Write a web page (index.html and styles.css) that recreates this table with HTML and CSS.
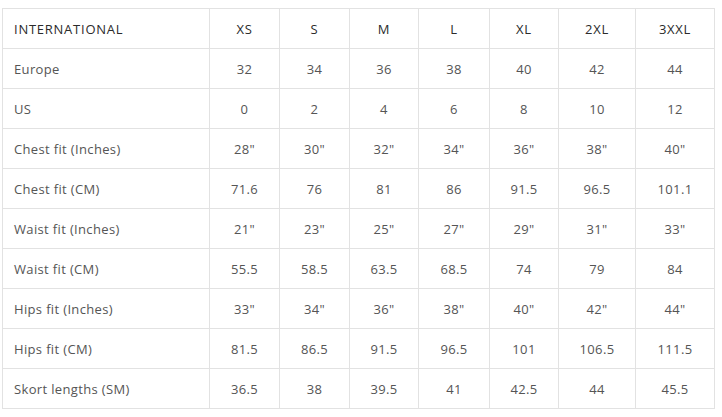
FILE: index.html
```html
<!DOCTYPE html>
<html>
<head>
<meta charset="utf-8">
<link rel="stylesheet" href="styles.css">
</head>
<body>
<table class="size-table">
  <colgroup>
    <col class="c-label"><col class="c70"><col class="c70"><col class="c69"><col class="c71"><col class="c69"><col class="c77"><col class="c79">
  </colgroup>
  <thead>
    <tr><th>INTERNATIONAL</th><th>XS</th><th>S</th><th>M</th><th>L</th><th>XL</th><th>2XL</th><th>3XXL</th></tr>
  </thead>
  <tbody>
    <tr><td>Europe</td><td>32</td><td>34</td><td>36</td><td>38</td><td>40</td><td>42</td><td>44</td></tr>
    <tr><td>US</td><td>0</td><td>2</td><td>4</td><td>6</td><td>8</td><td>10</td><td>12</td></tr>
    <tr><td>Chest fit (Inches)</td><td>28"</td><td>30"</td><td>32"</td><td>34"</td><td>36"</td><td>38"</td><td>40"</td></tr>
    <tr><td>Chest fit (CM)</td><td>71.6</td><td>76</td><td>81</td><td>86</td><td>91.5</td><td>96.5</td><td>101.1</td></tr>
    <tr><td>Waist fit (Inches)</td><td>21"</td><td>23"</td><td>25"</td><td>27"</td><td>29"</td><td>31"</td><td>33"</td></tr>
    <tr><td>Waist fit (CM)</td><td>55.5</td><td>58.5</td><td>63.5</td><td>68.5</td><td>74</td><td>79</td><td>84</td></tr>
    <tr><td>Hips fit (Inches)</td><td>33"</td><td>34"</td><td>36"</td><td>38"</td><td>40"</td><td>42"</td><td>44"</td></tr>
    <tr><td>Hips fit (CM)</td><td>81.5</td><td>86.5</td><td>91.5</td><td>96.5</td><td>101</td><td>106.5</td><td>111.5</td></tr>
    <tr><td>Skort lengths (SM)</td><td>36.5</td><td>38</td><td>39.5</td><td>41</td><td>42.5</td><td>44</td><td>45.5</td></tr>
  </tbody>
</table>
</body>
</html>
```
FILE: styles.css
```css
html, body {
  margin: 0;
  padding: 0;
  background: #ffffff;
}
body {
  padding: 8px 0 0 2px;
  font-family: "Open Sans", "DejaVu Sans", sans-serif;
}
.size-table {
  border-collapse: collapse;
  table-layout: fixed;
  width: 713px;
  border: 1px solid #e2e2e2;
}
.c-label { width: 207px; }
.c70 { width: 70px; }
.c69 { width: 69px; }
.c71 { width: 71px; }
.c77 { width: 77px; }
.c79 { width: 79px; }
.size-table th,
.size-table td {
  border: 1px solid #e2e2e2;
  height: 40px;
  padding: 1px 0 0;
  text-align: center;
  font-size: 13px;
  font-weight: 400;
  vertical-align: middle;
  box-sizing: border-box;
}
.size-table th {
  color: #2b2b2b;
  letter-spacing: 0.75px;
}
.size-table td {
  color: #555555;
  letter-spacing: 0.35px;
}
.size-table th:first-child,
.size-table td:first-child {
  text-align: left;
  padding-left: 11px;
}
```
